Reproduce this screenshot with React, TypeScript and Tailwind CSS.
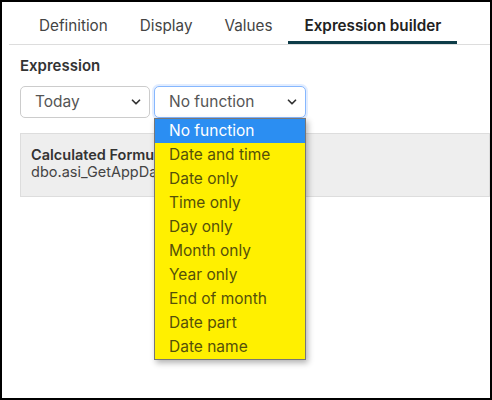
import { ChevronDown } from "lucide-react";

const TABS = ["Definition", "Display", "Values", "Expression builder"];
const OPTIONS = [
  "No function",
  "Date and time",
  "Date only",
  "Time only",
  "Day only",
  "Month only",
  "Year only",
  "End of month",
  "Date part",
  "Date name",
];

function Select({
  value,
  width,
  focused,
}: {
  value: string;
  width: string;
  focused?: boolean;
}) {
  return (
    <div
      className={`flex h-[32px] items-center justify-between rounded-[5px] border bg-white pl-[14px] pr-[6px] text-[15.5px] text-[#555] ${width} ${
        focused
          ? "border-[#86b7fe] shadow-[0_0_0_2px_rgba(13,110,253,0.12)]"
          : "border-[#ccc]"
      }`}
    >
      <span>{value}</span>
      <ChevronDown size={14} strokeWidth={3} className="text-[#333]" />
    </div>
  );
}

export default function App() {
  return (
    <div
      className="relative h-[400px] w-[492px] border-2 border-black bg-white"
      style={{ fontFamily: "Inter, 'Noto Sans', sans-serif" }}
    >
      {/* tabs */}
      <div className="ml-[7px] flex border-b border-[#ddd] pl-[14px]">
        {TABS.map((t, i) => {
          const active = i === TABS.length - 1;
          return (
            <div
              key={t}
              className={`px-4 pt-[13px] pb-[4px] text-[15.25px] leading-[22px] border-b-[3px] ${
                active
                  ? "border-[#0d3c48] font-semibold text-[#222]"
                  : "border-transparent text-[#444]"
              }`}
            >
              {t}
            </div>
          );
        })}
      </div>

      <div className="pl-[18px] pt-[10px]">
        <div className="text-[15px] font-semibold leading-[22px] text-[#333]">
          Expression
        </div>

        <div className="relative mt-[9px] flex gap-[4px]">
          <Select value="Today" width="w-[130px]" />
          <Select value="No function" width="w-[152px]" focused />

          {/* open dropdown */}
          <div className="absolute left-[134px] top-[32px] z-10 w-[152px] border border-[#777] bg-[#fff000] shadow-[2px_3px_6px_rgba(0,0,0,0.3)]">
            {OPTIONS.map((o, i) => (
              <div
                key={o}
                className={`h-[24px] pl-[14px] text-[15.5px] leading-[24px] ${
                  i === 0 ? "bg-[#2b8ef2] text-white" : "text-[#55500a]"
                }`}
              >
                {o}
              </div>
            ))}
          </div>
        </div>

        <div className="mt-[15px] h-[64px] border border-[#ddd] bg-[#eee] px-[10px] pt-[13px]">
          <div className="text-[14.5px] font-semibold leading-[16px] text-[#333]">
            Calculated Formula
          </div>
          <div className="text-[14.5px] leading-[17px] text-[#444]">
            dbo.asi_GetAppDate()
          </div>
        </div>
      </div>
    </div>
  );
}
